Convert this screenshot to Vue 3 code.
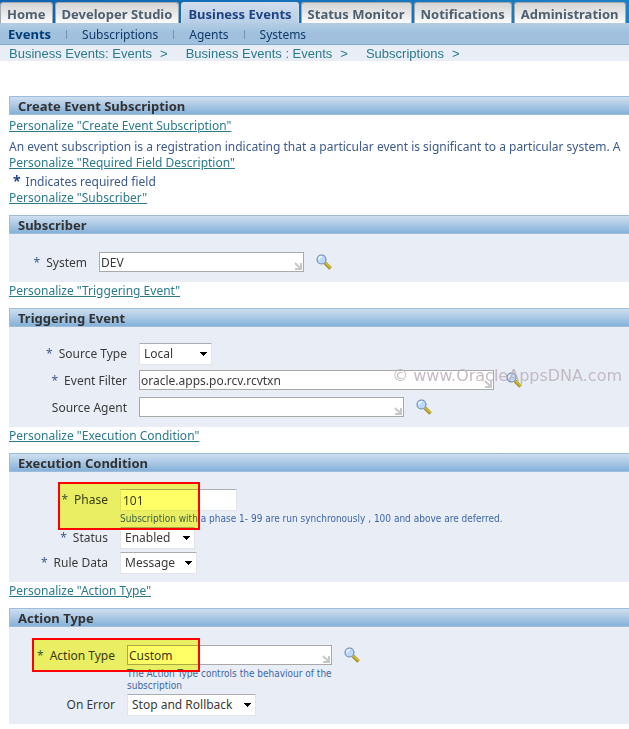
<script setup>
import { reactive } from 'vue'

const tabs = ['Home', 'Developer Studio', 'Business Events', 'Status Monitor', 'Notifications', 'Administration']
const subnav = ['Events', 'Subscriptions', 'Agents', 'Systems']
const crumbs = ['Business Events: Events', 'Business Events : Events', 'Subscriptions']

const sections = reactive([
  {
    key: 'subscriber', title: 'Subscriber', personalize: 'Subscriber',
    fields: [{ id: 'system', label: 'System', required: true, type: 'lov', size: 'medium', value: 'DEV' }]
  },
  {
    key: 'trigger', title: 'Triggering Event', personalize: 'Triggering Event', watermark: '© www.OracleAppsDNA.com',
    fields: [
      { id: 'source-type', label: 'Source Type', required: true, type: 'select', size: 'w73', value: 'Local', options: ['Local', 'External', 'Error'] },
      { id: 'event-filter', label: 'Event Filter', required: true, type: 'lov', size: 'wide', value: 'oracle.apps.po.rcv.rcvtxn' },
      { id: 'source-agent', label: 'Source Agent', type: 'lov', size: 'large', value: '' }
    ]
  },
  {
    key: 'execution', title: 'Execution Condition', personalize: 'Execution Condition',
    fields: [
      { id: 'phase', label: 'Phase', required: true, type: 'text', value: '101', marked: true, hint: 'Subscription with a phase 1- 99 are run synchronously , 100 and above are deferred.' },
      { id: 'status', label: 'Status', required: true, type: 'select', size: 'w75', value: 'Enabled', options: ['Enabled', 'Disabled'] },
      { id: 'rule-data', label: 'Rule Data', required: true, type: 'select', size: 'w77', value: 'Message', options: ['Message', 'Key'] }
    ]
  },
  {
    key: 'action', title: 'Action Type', personalize: 'Action Type',
    fields: [
      { id: 'action-type', label: 'Action Type', required: true, type: 'lov', size: 'medium', value: 'Custom', marked: true, hint: 'The Action Type controls the behaviour of the subscription' },
      { id: 'on-error', label: 'On Error', type: 'select', size: 'w129', value: 'Stop and Rollback', options: ['Stop and Rollback', 'Skip to Next'] }
    ]
  }
])
</script>

<template>
  <div class="page">
    <header>
      <nav class="tabs">
        <a v-for="t in tabs" :key="t" href="#" :class="['tab', { active: t === 'Business Events' }]">{{ t }}</a>
      </nav>
      <nav class="subnav">
        <a v-for="s in subnav" :key="s" href="#" :class="{ current: s === 'Events' }">{{ s }}</a>
      </nav>
      <nav class="crumbs">
        <span v-for="c in crumbs" :key="c"><a href="#">{{ c }}</a><i>&gt;</i></span>
      </nav>
    </header>

    <main>
      <h1 class="bar">Create Event Subscription</h1>
      <div class="intro">
        <a href="#" class="personalize first">Personalize "Create Event Subscription"</a>
        <p class="about">An event subscription is a registration indicating that a particular event is significant to a particular system. A</p>
        <a href="#" class="personalize">Personalize "Required Field Description"</a>
        <p class="note"><b>*</b>Indicates required field</p>
      </div>

      <section v-for="s in sections" :key="s.key" :class="s.key">
        <a href="#" class="personalize">Personalize "{{ s.personalize }}"</a>
        <h2 class="bar">{{ s.title }}</h2>
        <div class="panel">
          <div v-for="f in s.fields" :key="f.id" :class="['row', { hinted: f.hint, marked: f.marked }]">
            <label :for="f.id"><span v-if="f.required" class="star">*</span>{{ f.label }}</label>
            <div class="control">
              <select v-if="f.type === 'select'" :id="f.id" v-model="f.value" :class="f.size">
                <option v-for="o in f.options" :key="o">{{ o }}</option>
              </select>
              <input v-else-if="f.type === 'text'" :id="f.id" v-model="f.value" type="text" class="plain">
              <div v-else class="lov-line">
                <span :class="['lov-box', f.size]">
                  <input :id="f.id" v-model="f.value" type="text">
                  <svg class="corner" width="8" height="8" viewBox="0 0 8 8" aria-hidden="true">
                    <path d="M1 1L6 6M7 1V7H1" fill="none" stroke="#c8c8c8" stroke-width="2" />
                  </svg>
                </span>
                <button type="button" class="search" :aria-label="'Search ' + f.label">
                  <svg width="16" height="16" viewBox="0 0 16 16">
                    <path d="M9 9L14.5 14.5" stroke="#9c8a24" stroke-width="3.6" />
                    <path d="M9.4 8.8L14.9 14.2" stroke="#cdb935" stroke-width="2" />
                    <circle cx="5.5" cy="5.5" r="4.5" fill="#bcd8fb" stroke="#6b87ad" stroke-width="1.1" />
                    <path d="M3 6A3 3 0 0 1 6 2.6" fill="none" stroke="#eaf4ff" stroke-width="1.6" />
                  </svg>
                </button>
              </div>
              <p v-if="f.hint" class="hint">{{ f.hint }}</p>
            </div>
            <span v-if="f.marked" class="marker"></span>
          </div>
          <span v-if="s.watermark" class="watermark">{{ s.watermark }}</span>
        </div>
      </section>
    </main>
  </div>
</template>

<style>
body { background: #fff; overflow: hidden; }
</style>

<style scoped>
.page { font: 12px/16px "Noto Sans", sans-serif; color: #3a3a3a; overflow: hidden; }
h1, h2, p { margin: 0; }
a { text-decoration: none; }
.tabs { display: flex; gap: 2px; height: 23px; padding-top: 2px; box-sizing: border-box; background: linear-gradient(90deg, #0f63b0, #1c80c4); white-space: nowrap; }
.tab { box-sizing: border-box; padding: 0 6px; font-size: 13px; font-weight: bold; line-height: 22px; color: #4e5f70; background: linear-gradient(#d4d4d4, #fbfbfb); border: solid #a0a8b0; border-width: 1px 1px 0; border-radius: 3px 3px 0 0; }
.tab.active { color: #1f4484; background: linear-gradient(#cfdcec, #b8cfe6); border-color: #cfdcec; }
.subnav { display: flex; height: 22px; box-sizing: border-box; padding-left: 8px; line-height: 23px; background: linear-gradient(#b4cde4, #a0c0de 50%); border-bottom: 1px solid #86abd2; }
.subnav a { color: #0f3a69; }
.subnav a + a::before { content: ""; display: inline-block; width: 1px; height: 9px; margin: 0 15px; background: #7892ac; }
.subnav .current { font-size: 13px; font-weight: bold; color: #003c78; }
.crumbs { display: flex; gap: 18px; height: 16px; padding-left: 9px; font: 13px/17px "Liberation Sans", sans-serif; background: #e9eef6; }
.crumbs a, .crumbs i { color: #2b7a8c; font-style: normal; }
.crumbs i { margin-left: 8px; }
main { padding: 35px 0 0 9px; }
.bar { box-sizing: border-box; height: 19px; padding-left: 8px; font-size: 13px; font-weight: bold; line-height: 18px; color: #333; background: linear-gradient(#cfdff0, #85b1d9); border: solid #9dbddb; border-width: 1px 0 1px 1px; }
.personalize { display: block; width: fit-content; color: #2b7a8c; text-decoration: underline; }
.first { margin-top: 3px; }
.about { margin-top: 5px; color: #3c5a8c; white-space: nowrap; }
.note { padding: 3px 0 0 4px; color: #3c5a8c; }
.note b { margin-right: 5px; font-size: 14px; line-height: 14px; color: #1f4484; }
section .bar { margin-top: 9px; }
section + section { padding-top: 1px; }
.panel { position: relative; box-sizing: border-box; background: #e9eef6; }
.row { display: flex; align-items: flex-start; }
.marked { position: relative; }
label { flex: none; text-align: right; line-height: 22px; }
.star { margin-right: 6px; color: #3c5a8c; }
.control { margin-left: 12px; }
.lov-line { display: flex; align-items: flex-start; }
.lov-box { position: relative; display: flex; box-sizing: border-box; height: 20px; border: 1px solid #a9a9a9; background: #fff; }
.lov-box input { flex: 1; min-width: 0; border: 0; padding: 2px 1px 0; background: none; font: inherit; color: inherit; }
.corner { position: absolute; right: 1px; bottom: 1px; }
.medium { width: 205px; }
.large { width: 265px; }
.wide { width: 355px; }
.search { display: flex; margin: 2px 0 0 12px; padding: 0; border: 0; background: none; }
select, .plain { display: block; box-sizing: border-box; height: 22px; margin: 0; border: 1px solid #e2e4e8; border-top-color: #abadb3; border-radius: 1px; background-color: #fff; font: inherit; color: inherit; }
select { appearance: none; padding: 0 4px; background-image: linear-gradient(#000, #000), linear-gradient(#000, #000), linear-gradient(#000, #000), linear-gradient(#000, #000); background-repeat: no-repeat; background-size: 7px 1px, 5px 1px, 3px 1px, 1px 1px; background-position: right 4px top 8px, right 5px top 9px, right 6px top 10px, right 7px top 11px; }
.plain { width: 117px; padding: 0 2px; }
.w73 { width: 73px; }
.w75 { width: 75px; }
.w77 { width: 77px; }
.w129 { width: 129px; }
.hint { font: 10px/12px "DejaVu Sans Condensed", "DejaVu Sans", sans-serif; color: #3e66a5; }
.subscriber .panel { padding: 18px 0 8px; }
.subscriber label { width: 78px; }
.trigger .panel { padding: 16px 0 10px; }
.trigger label { width: 118px; }
.trigger .row { height: 27px; }
.trigger .row:last-of-type { height: 20px; }
.execution .panel { padding: 17px 0 8px; }
.execution label { width: 99px; }
.execution .row { height: 25px; }
.execution .hinted { height: 38px; }
.execution .row:last-of-type { height: 22px; }
.execution .hint { margin-top: 2px; white-space: nowrap; }
.action .panel { padding: 18px 0 8px; }
.action label { width: 106px; }
.action .hinted { height: 49px; }
.action .hint { width: 212px; margin-top: 3px; }
.marker { position: absolute; box-sizing: border-box; border: 2px solid #f00; pointer-events: none; }
.marker::before { content: ""; position: absolute; inset: 0; background: #ff0; mix-blend-mode: multiply; opacity: .6; }
.execution .marker { left: 49px; top: -7px; width: 142px; height: 48px; }
.action .marker { left: 23px; top: -7px; width: 168px; height: 34px; }
.watermark { position: absolute; top: 39px; right: 7px; font: 16px/20px "DejaVu Sans", sans-serif; color: #bcb0ba; opacity: .85; pointer-events: none; }
</style>
